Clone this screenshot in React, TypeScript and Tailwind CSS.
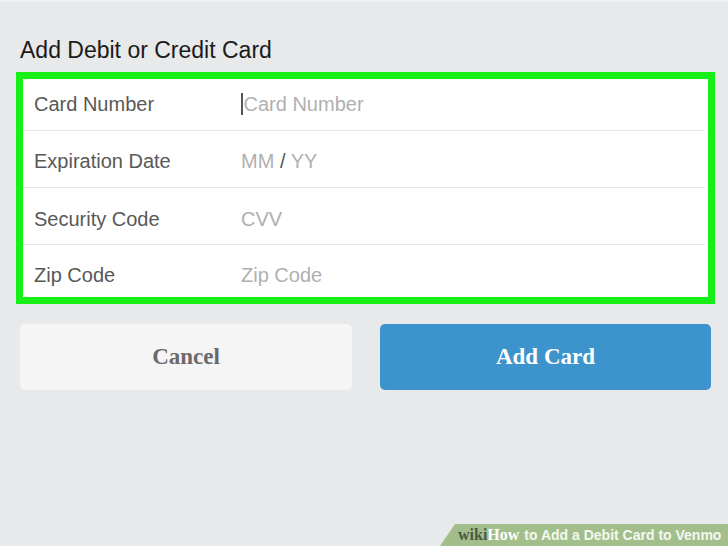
import React from "react";

const rows = [
  { label: "Card Number", ph: "card", cls: "h-[52px] pb-[1px] border-b" },
  { label: "Expiration Date", ph: "exp", cls: "h-[57px] pt-[4px] border-b" },
  { label: "Security Code", ph: "CVV", cls: "h-[57px] pt-[5px] border-b" },
  { label: "Zip Code", ph: "Zip Code", cls: "h-[52px] pt-[8px]" },
];

export default function App() {
  return (
    <div
      className="relative w-[728px] h-[546px] overflow-hidden bg-[#e7e9ea]"
      style={{ fontFamily: '"Liberation Sans", Arial, sans-serif' }}
    >
      <div className="h-[2px] bg-[#f1f2f3]" />
      <div className="pt-[36px] pl-[20px] text-[23px] leading-[25px] text-[#1b1b1b]">
        Add Debit or Credit Card
      </div>
      <div className="mt-[9px] ml-[16px] w-[699px] border-[7px] border-[#16f016] bg-white">
        {rows.map((r) => (
          <div
            key={r.label}
            className={`flex items-center mr-[3px] border-[#e6e6e6] ${r.cls}`}
          >
            <div className="w-[218px] pl-[11px] text-[20px] text-[#585858]">{r.label}</div>
            <div className="flex items-center text-[20px] text-[#b0b0b0]">
              {r.ph === "card" ? (
                <>
                  <span className="inline-block w-[1.5px] h-[22px] bg-[#555] mr-[1px]" />
                  <span>Card Number</span>
                </>
              ) : r.ph === "exp" ? (
                <span>
                  MM <span className="text-[#555]">/</span> YY
                </span>
              ) : (
                <span>{r.ph}</span>
              )}
            </div>
          </div>
        ))}
      </div>
      <div className="mt-[20px] ml-[20px] flex gap-[28px]">
        <button
          className="w-[332px] h-[66px] rounded-[5px] bg-[#f5f5f5] text-[23px] font-bold text-[#6a6a6a]"
          style={{ fontFamily: '"Liberation Serif", "Times New Roman", serif' }}
        >
          Cancel
        </button>
        <button
          className="w-[331px] h-[66px] rounded-[5px] bg-[#3d94cd] text-[23px] font-bold text-white"
          style={{ fontFamily: '"Liberation Serif", "Times New Roman", serif' }}
        >
          Add Card
        </button>
      </div>
      <div className="absolute left-[440px] top-[524px] w-[288px] h-[22px] bg-[#a2bf8b] [clip-path:polygon(15px_0,100%_0,100%_100%,0_100%)] flex items-center pl-[18px]">
        <span
          className="text-[16px] font-bold text-[#4a5a43] leading-none"
          style={{ fontFamily: '"Liberation Serif", serif' }}
        >
          wiki
        </span>
        <span
          className="text-[16px] font-bold text-white leading-none"
          style={{ fontFamily: '"Liberation Serif", serif' }}
        >
          How
        </span>
        <span className="ml-[5px] text-[14px] font-bold text-[#f4f8f0] leading-none whitespace-nowrap">
          to Add a Debit Card to Venmo
        </span>
      </div>
    </div>
  );
}
